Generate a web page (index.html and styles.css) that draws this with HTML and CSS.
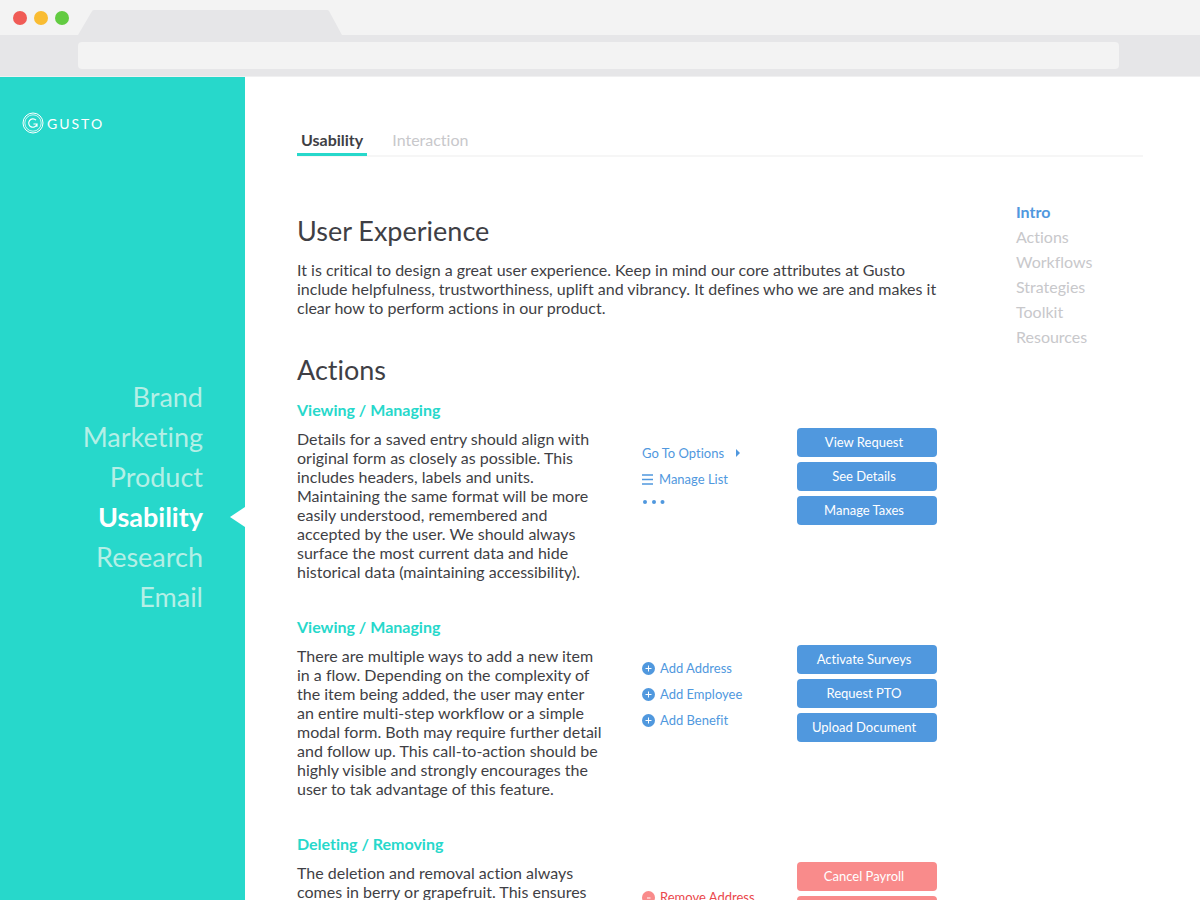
FILE: index.html
```html
<!DOCTYPE html>
<html lang="en">
<head>
<meta charset="utf-8">
<title>Gusto – Usability</title>
<link rel="stylesheet" href="styles.css">
</head>
<body>
<div class="window">
  <header class="chrome">
    <div class="tabstrip">
      <div class="lights"><span class="light red"></span><span class="light amber"></span><span class="light green"></span></div>
      <svg class="tab" viewBox="0 0 264 25" aria-hidden="true"><path d="M0 25 13.500 2Q14.500 0 16 0H249Q250.500 0 251 1L264 25Z"/></svg>
    </div>
    <div class="toolbar"><input class="address" type="text" aria-label="Address"></div>
  </header>
  <div class="app">
    <aside class="sidebar">
      <a class="brand" href="#" aria-label="Gusto">
        <svg class="brand-mark" viewBox="0 0 22 22" fill="none" stroke="currentColor">
          <circle cx="11" cy="11" r="10" stroke-width="1"/>
          <circle cx="11" cy="11" r="8.200" stroke-width="0.800"/>
          <path d="M14 8.200A4.200 4.200 0 1 0 15 12H11.400M15 12V14.800" stroke-width="1.200"/>
        </svg>
        <span class="brand-name">GUSTO</span>
      </a>
      <nav class="side-nav" aria-label="Guides">
        <a href="#">Brand</a>
        <a href="#">Marketing</a>
        <a href="#">Product</a>
        <a class="current" href="#">Usability</a>
        <a href="#">Research</a>
        <a href="#">Email</a>
      </nav>
    </aside>
    <main class="main">
      <nav class="tabs" aria-label="Sections">
        <a class="current" href="#">Usability</a>
        <a href="#">Interaction</a>
      </nav>
      <div class="columns">
        <article class="content">
          <h1>User Experience</h1>
          <p class="intro">It is critical to design a great user experience. Keep in mind our core attributes at Gusto<br>include helpfulness, trustworthiness, uplift and vibrancy. It defines who we are and makes it<br>clear how to perform actions in our product.</p>
          <h2>Actions</h2>

          <section class="entry">
            <h3>Viewing / Managing</h3>
            <div class="entry-body">
              <p>Details for a saved entry should align with<br>original form as closely as possible. This<br>includes headers, labels and units.<br>Maintaining the same format will be more<br>easily understood, remembered and<br>accepted by the user. We should always<br>surface the most current data and hide<br>historical data (maintaining accessibility).</p>
              <div class="links view-links">
                <a href="#">Go To Options<svg class="caret" viewBox="0 0 4 8"><path d="M0 0 4 4 0 8Z"/></svg></a>
                <a href="#"><svg class="bars" viewBox="0 0 11 11"><path d="M0 1H11M0 5.500H11M0 10H11"/></svg>Manage List</a>
                <a class="more" href="#" aria-label="More"><svg class="dots" viewBox="0 0 22 4"><circle cx="2" cy="2" r="2"/><circle cx="11" cy="2" r="2"/><circle cx="19.500" cy="2" r="2"/></svg></a>
              </div>
              <div class="buttons">
                <button type="button">View Request</button>
                <button type="button">See Details</button>
                <button type="button">Manage Taxes</button>
              </div>
            </div>
          </section>

          <section class="entry">
            <h3>Viewing / Managing</h3>
            <div class="entry-body">
              <p>There are multiple ways to add a new item<br>in a flow. Depending on the complexity of<br>the item being added, the user may enter<br>an entire multi-step workflow or a simple<br>modal form. Both may require further detail<br>and follow up. This call-to-action should be<br>highly visible and strongly encourages the<br>user to tak advantage of this feature.</p>
              <div class="links add-links">
                <a href="#"><svg class="badge" viewBox="0 0 13 13"><circle cx="6.500" cy="6.500" r="6.500"/><path d="M3.500 6.500H9.500M6.500 3.500V9.500"/></svg>Add Address</a>
                <a href="#"><svg class="badge" viewBox="0 0 13 13"><circle cx="6.500" cy="6.500" r="6.500"/><path d="M3.500 6.500H9.500M6.500 3.500V9.500"/></svg>Add Employee</a>
                <a href="#"><svg class="badge" viewBox="0 0 13 13"><circle cx="6.500" cy="6.500" r="6.500"/><path d="M3.500 6.500H9.500M6.500 3.500V9.500"/></svg>Add Benefit</a>
              </div>
              <div class="buttons">
                <button type="button">Activate Surveys</button>
                <button type="button">Request PTO</button>
                <button type="button">Upload Document</button>
              </div>
            </div>
          </section>

          <section class="entry danger">
            <h3>Deleting / Removing</h3>
            <div class="entry-body">
              <p>The deletion and removal action always<br>comes in berry or grapefruit. This ensures</p>
              <div class="links remove-links">
                <a href="#"><svg class="badge" viewBox="0 0 13 13"><circle cx="6.500" cy="6.500" r="6.500"/><path d="M5 7H8.500"/></svg>Remove Address</a>
              </div>
              <div class="buttons">
                <button type="button">Cancel Payroll</button>
                <button type="button" aria-label="Remove"></button>
              </div>
            </div>
          </section>
        </article>
        <nav class="toc" aria-label="On this page">
          <a class="current" href="#">Intro</a>
          <a href="#">Actions</a>
          <a href="#">Workflows</a>
          <a href="#">Strategies</a>
          <a href="#">Toolkit</a>
          <a href="#">Resources</a>
        </nav>
      </div>
    </main>
  </div>
</div>
</body>
</html>
```
FILE: styles.css
```css
* { box-sizing: border-box; }
body {
  margin: 0;
  font-family: Lato, "Open Sans", sans-serif;
  font-size: 16px;
  line-height: 19px;
  font-variant-ligatures: none;
  color: #3f3f45;
  background: #fff;
}
a { color: inherit; text-decoration: none; }
h1, h2, h3, p { margin: 0; }

.window { display: flex; flex-direction: column; height: 100vh; overflow: hidden; }

/* Browser chrome */
.chrome { flex: none; border-bottom: 1px solid #f0f0f1; background: #e6e6e8; }
.tabstrip { display: flex; align-items: flex-end; height: 35px; padding-left: 13px; background: #f3f3f3; }
.lights { display: flex; gap: 7px; width: 65px; padding-bottom: 10px; }
.light { width: 14px; height: 14px; border-radius: 50%; }
.red { background: #f05b56; }
.amber { background: #f9bc32; }
.green { background: #62cb41; }
.tab { width: 264px; height: 25px; fill: #e6e6e8; }
.toolbar { padding: 7px 81px 7px 78px; }
.address { display: block; width: 100%; height: 27px; border: 0; border-radius: 4px; padding: 0 10px; background: #f3f3f3; }

.app { display: flex; flex: 1; min-height: 0; }

/* Sidebar */
.sidebar { flex: none; display: flex; flex-direction: column; width: 245px; background: #27d8cb; color: #fff; }
.brand { display: flex; align-items: center; gap: 3px; margin: 35px 0 0 22px; }
.brand-mark { width: 22px; height: 22px; }
.brand-name { font-size: 14px; letter-spacing: 2px; }
.side-nav { display: flex; flex-direction: column; margin-top: 243px; font-size: 27px; line-height: 40px; text-align: right; color: #b4efe6; }
.side-nav a { position: relative; padding-right: 42px; }
.side-nav .current { color: #fff; font-weight: 700; }
.side-nav .current::after {
  content: "";
  position: absolute;
  top: 10px;
  right: 0;
  border: 10px solid transparent;
  border-left: 0;
  border-right: 15px solid #fff;
}

/* Main column */
.main { flex: 1; min-width: 0; padding: 51px 57px 0 52px; overflow: hidden; }
.tabs { display: flex; gap: 21px; border-bottom: 2px solid #f6f6f6; color: #c8c8cb; line-height: 24px; }
.tabs a { padding: 0 4px 3px; }
.tabs .current { padding-bottom: 1px; border-bottom: 3px solid #27d8cb; margin-bottom: -1px; color: #3f3f45; font-weight: 700; }
.columns { display: flex; gap: 79px; padding-top: 42px; }
.content { flex: 1; min-width: 0; padding-top: 14px; }
h1, h2 { font-size: 27px; line-height: 36px; font-weight: 400; }
h1 { margin-bottom: 11px; }
.intro { margin-bottom: 35px; white-space: nowrap; }
h2 { margin-bottom: 12px; }
h3 { font-size: 16px; line-height: 20px; font-weight: 700; color: #27d8cb; }

.entry { margin-bottom: 36px; }
.entry-body { display: grid; grid-template-columns: 1fr 155px 140px; padding-top: 8px; }
.entry-body p { padding-top: 1px; white-space: nowrap; }
.links { display: flex; flex-direction: column; align-items: flex-start; font-size: 13px; line-height: 26px; color: #5098de; white-space: nowrap; }
.links a { display: flex; align-items: center; }
.view-links { padding-top: 12px; }
.add-links { padding-top: 10px; }
.remove-links { padding-top: 22px; color: #ea484c; }
.more { height: 20px; }
.caret { width: 4px; height: 8px; margin-left: 12px; fill: currentColor; }
.bars { width: 11px; height: 11px; margin-right: 6px; stroke: currentColor; stroke-width: 1.5; }
.dots { width: 22px; height: 4px; margin-left: 1px; fill: currentColor; }
.badge { width: 13px; height: 13px; margin-right: 5px; fill: #5098de; stroke-width: 1; }
.badge path { stroke: #fff; }
.buttons { display: flex; flex-direction: column; gap: 5px; }
.buttons button { height: 29px; border: 0; border-radius: 4px; padding: 0 6px 0 0; background: #5098de; color: #fff; font: inherit; font-size: 13px; }
.danger .badge { fill: #f98b8b; }
.danger .buttons button { background: #f98b8b; }

.toc { flex: none; display: flex; flex-direction: column; width: 127px; line-height: 25px; color: #c8c8cb; }
.toc .current { color: #5098de; font-weight: 700; }
```
